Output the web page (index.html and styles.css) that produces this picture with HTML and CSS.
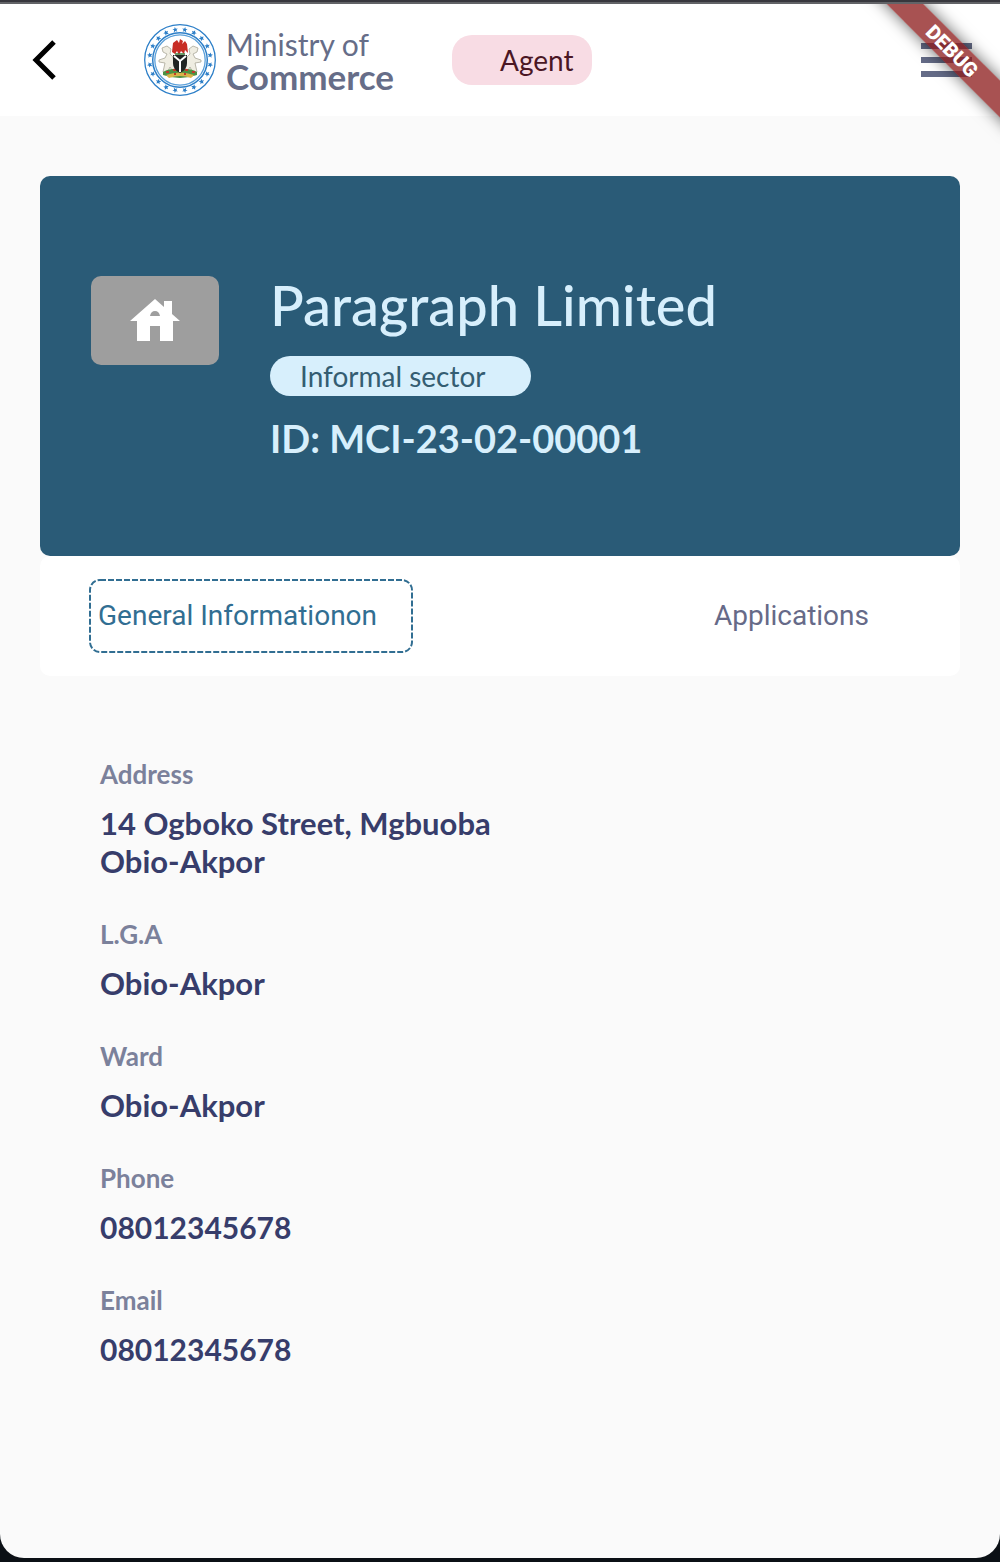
FILE: index.html
```html
<!DOCTYPE html>
<html lang="en">
<head>
<meta charset="utf-8">
<meta name="viewport" content="width=device-width, initial-scale=1">
<title>Ministry of Commerce</title>
<link rel="stylesheet" href="styles.css">
</head>
<body>
<div class="screen">
  <header class="topbar">
    <button class="icon-button back" aria-label="Back">
      <svg width="24" height="40" viewBox="0 0 24 40"><path d="M22 2 4 20l18 18" fill="none" stroke="#000" stroke-width="5"/></svg>
    </button>
    <a class="brand" href="#">
      <svg class="seal" width="72" height="72" viewBox="0 0 72 72" aria-hidden="true">
        <defs>
          <path id="star" d="M36 2.6l.8 1.8 1.9.1-1.5 1.3.6 2-1.8-1.1-1.8 1.1.6-2-1.5-1.3 1.9-.1z"/>
          <g id="stars"><use href="#star" transform="rotate(9 36 36)"/><use href="#star" transform="rotate(27 36 36)"/><use href="#star" transform="rotate(45 36 36)"/><use href="#star" transform="rotate(63 36 36)"/><use href="#star" transform="rotate(81 36 36)"/></g>
        </defs>
        <circle cx="36" cy="36" r="35.3" fill="#fff" stroke="#2d7fc8" stroke-width="1.3"/>
        <g fill="#2d7fc8">
          <use href="#stars"/>
          <use href="#stars" transform="rotate(90 36 36)"/>
          <use href="#stars" transform="rotate(180 36 36)"/>
          <use href="#stars" transform="rotate(270 36 36)"/>
        </g>
        <circle cx="36" cy="36" r="27.3" fill="none" stroke="#2d7fc8" stroke-width="1.5"/>
        <circle cx="36" cy="36" r="25.2" fill="none" stroke="#5b9fd8" stroke-width="1.3"/>
        <g fill="#efede2" stroke="#a9a798" stroke-width=".8">
          <path d="M29 33l-3-3 1-5-4-3-5 2 1 4 4 2-2 4-6 2v2l6 1-2 9 4 1 3-6 3 5 3-1-2-7z"/>
          <path d="M43 33l3-3-1-5 4-3 5 2-1 4-4 2 2 4 6 2v2l-6 1 2 9-4 1-3-6-3 5-3-1 2-7z"/>
        </g>
        <path d="M19 48q7-4 17-3 10-1 17 3v3q-8 3-17 3t-17-3z" fill="#4c9244"/>
        <path d="M22 51q14-5 28 0l-3 3q-11-4-22 0z" fill="#d8b44a"/>
        <path d="M22 48h3m4-2h3m9 0h3m4 2h3M30 50h2m8 0h2" stroke="#c23a2c" stroke-width="2"/>
        <path d="M29 31h14v8q0 7-7 10-7-3-7-10z" fill="#202422"/>
        <path d="M30 32l6 5 6-5M36 37v11" fill="none" stroke="#fff" stroke-width="2"/>
        <path d="M28 28l1-9 4-3 2 3 1-4 3 2-1 3 3-3 2 3 1 9-3-3-1 4-3-3-2 4-2-4-2 3z" fill="#c82d25"/>
        <path d="M31 30h10" stroke="#3b7b3a" stroke-width="1.5"/>
      </svg>
      <span class="brand-name"><span>Ministry of</span><strong>Commerce</strong></span>
    </a>
    <span class="role">Agent</span>
    <button class="icon-button menu" aria-label="Menu">
      <svg width="51" height="34" viewBox="0 0 51 34"><path d="M0 3h51M0 17h51M0 31h51" stroke="#646b87" stroke-width="6"/></svg>
    </button>
  </header>
  <div class="debug" aria-hidden="true"><span>DEBUG</span></div>

  <main class="content">
    <section class="company">
      <div class="thumb">
        <svg width="50" height="43" viewBox="0 0 50 43"><path fill="#fff" fill-rule="evenodd" d="M0 22 25 0l9 8V2h8v13l8 7h-7v20H30V27H20v15H7V22zM20 17h10q-1-5-5-5t-5 5z"/></svg>
      </div>
      <div class="company-text">
        <h1>Paragraph Limited</h1>
        <span class="sector">Informal sector</span>
        <p class="company-id">ID: MCI-23-02-00001</p>
      </div>
    </section>
    <nav class="tabs">
      <button class="tab tab-active">
        <svg class="tab-outline" aria-hidden="true"><rect class="tab-dash" x="1" y="1" rx="10"/></svg>
        General Informationon
      </button>
      <button class="tab">Applications</button>
    </nav>
    <dl class="details">
      <div><dt>Address</dt><dd>14 Ogboko Street, Mgbuoba<br>Obio-Akpor</dd></div>
      <div><dt>L.G.A</dt><dd>Obio-Akpor</dd></div>
      <div><dt>Ward</dt><dd>Obio-Akpor</dd></div>
      <div><dt>Phone</dt><dd class="number">08012345678</dd></div>
      <div><dt>Email</dt><dd class="number">08012345678</dd></div>
    </dl>
  </main>
</div>
</body>
</html>
```
FILE: styles.css
```css
* { box-sizing: border-box; }

body {
  margin: 0;
  min-height: 100vh;
  display: flex;
  flex-direction: column;
  padding-bottom: 4px;
  border-top: 2px solid #37373d;
  background: #0b1015;
  font-family: Lato, sans-serif;
}

.screen {
  position: relative;
  flex: 1;
  overflow: hidden;
  background: #fafafa;
  border-top: 2px solid #626367;
  border-radius: 0 0 24px 24px;
}

button {
  border: 0;
  padding: 0;
  background: none;
  font: inherit;
  color: inherit;
  cursor: pointer;
}

.topbar {
  display: flex;
  align-items: center;
  height: 112px;
  padding: 0 28px 0 32px;
  background: #fff;
}

.icon-button svg { display: block; }

.brand {
  display: flex;
  align-items: center;
  gap: 10px;
  margin-left: 88px;
  color: #666d88;
  text-decoration: none;
}

.brand-name {
  display: flex;
  flex-direction: column;
  font-size: 30px;
  line-height: 32px;
}

.brand-name strong { font-size: 35px; }

.role {
  margin-left: 58px;
  padding: 0 18px 0 48px;
  border-radius: 20px;
  background: #f8dce4;
  color: #4b1624;
  font-size: 28px;
  line-height: 50px;
}

.menu { margin-left: auto; }

.debug {
  position: absolute;
  top: 0;
  right: 0;
  width: 150px;
  height: 150px;
  overflow: hidden;
  pointer-events: none;
}

.debug span {
  position: absolute;
  top: 34px;
  right: -52px;
  width: 200px;
  background: rgba(139, 24, 24, 0.75);
  box-shadow: 0 0 16px rgba(0, 0, 0, 0.6);
  color: #fff;
  font: 900 20px/26px Roboto, sans-serif;
  text-align: center;
  transform: rotate(45deg);
}

.content { padding: 60px 40px; }

.company {
  display: flex;
  align-items: flex-start;
  gap: 51px;
  min-height: 380px;
  padding: 100px 51px 80px;
  border-radius: 10px;
  background: #2a5b77;
  color: #d7effc;
}

.thumb {
  display: flex;
  align-items: center;
  justify-content: center;
  width: 128px;
  height: 89px;
  border-radius: 10px;
  background: #9e9e9e;
}

.company-text {
  display: flex;
  flex-direction: column;
  align-items: flex-start;
}

h1 {
  margin: 0 0 22px;
  font-size: 56px;
  font-weight: 500;
  line-height: 58px;
}

.sector {
  padding: 0 45px 0 30px;
  border-radius: 20px;
  background: #d7effc;
  color: #345d72;
  font-size: 28px;
  line-height: 40px;
}

.company-id {
  margin: 18px 0 0;
  font-size: 38px;
  font-weight: 700;
  line-height: 48px;
}

.tabs {
  display: flex;
  align-items: center;
  justify-content: space-between;
  height: 120px;
  padding: 0 91px 0 49px;
  border-radius: 10px;
  background: #fff;
  color: #666a88;
  font: 28px/32px Roboto, sans-serif;
}

.tab-active {
  position: relative;
  width: 324px;
  height: 74px;
  padding-left: 9px;
  color: #316e92;
  text-align: left;
}

.tab-outline {
  position: absolute;
  inset: 0;
  width: 100%;
  height: 100%;
}

.tab-dash {
  width: calc(100% - 2px);
  height: calc(100% - 2px);
  fill: none;
  stroke: #316e92;
  stroke-width: 2px;
  stroke-dasharray: 6 2;
}

.details {
  display: flex;
  flex-direction: column;
  gap: 38px;
  margin: 82px 60px 0;
}

dt {
  margin-bottom: 14px;
  color: #7b819b;
  font-size: 26px;
  font-weight: 700;
  line-height: 32px;
}

dd {
  margin: 0;
  color: #373d6b;
  font-size: 31px;
  font-weight: 700;
  line-height: 38px;
}

.number { font-size: 30px; }
```
